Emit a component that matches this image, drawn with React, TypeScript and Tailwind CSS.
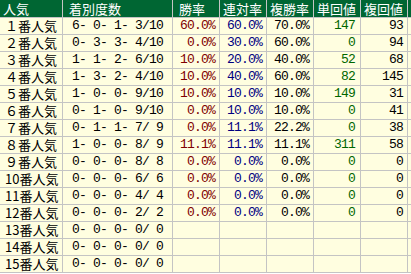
import React from "react";

type Row = {
  name: string;
  record: string;
  win?: string;
  ren?: string;
  fuku?: string;
  tanVal?: string;
  fukuVal?: string;
};

const rows: Row[] = [
  { name: "１番人気", record: "6- 0- 1- 3/10", win: "60.0%", ren: "60.0%", fuku: "70.0%", tanVal: "147", fukuVal: "93" },
  { name: "２番人気", record: "0- 3- 3- 4/10", win: "0.0%", ren: "30.0%", fuku: "60.0%", tanVal: "0", fukuVal: "94" },
  { name: "３番人気", record: "1- 1- 2- 6/10", win: "10.0%", ren: "20.0%", fuku: "40.0%", tanVal: "52", fukuVal: "68" },
  { name: "４番人気", record: "1- 3- 2- 4/10", win: "10.0%", ren: "40.0%", fuku: "60.0%", tanVal: "82", fukuVal: "145" },
  { name: "５番人気", record: "1- 0- 0- 9/10", win: "10.0%", ren: "10.0%", fuku: "10.0%", tanVal: "149", fukuVal: "31" },
  { name: "６番人気", record: "0- 1- 0- 9/10", win: "0.0%", ren: "10.0%", fuku: "10.0%", tanVal: "0", fukuVal: "41" },
  { name: "７番人気", record: "0- 1- 1- 7/ 9", win: "0.0%", ren: "11.1%", fuku: "22.2%", tanVal: "0", fukuVal: "38" },
  { name: "８番人気", record: "1- 0- 0- 8/ 9", win: "11.1%", ren: "11.1%", fuku: "11.1%", tanVal: "311", fukuVal: "58" },
  { name: "９番人気", record: "0- 0- 0- 8/ 8", win: "0.0%", ren: "0.0%", fuku: "0.0%", tanVal: "0", fukuVal: "0" },
  { name: "10番人気", record: "0- 0- 0- 6/ 6", win: "0.0%", ren: "0.0%", fuku: "0.0%", tanVal: "0", fukuVal: "0" },
  { name: "11番人気", record: "0- 0- 0- 4/ 4", win: "0.0%", ren: "0.0%", fuku: "0.0%", tanVal: "0", fukuVal: "0" },
  { name: "12番人気", record: "0- 0- 0- 2/ 2", win: "0.0%", ren: "0.0%", fuku: "0.0%", tanVal: "0", fukuVal: "0" },
  { name: "13番人気", record: "0- 0- 0- 0/ 0" },
  { name: "14番人気", record: "0- 0- 0- 0/ 0" },
  { name: "15番人気", record: "0- 0- 0- 0/ 0" },
];

const headers = ["人気", " 着別度数", " 勝率", "連対率", "複勝率", "単回値", "複回値", "平"];

const jp = "font-['Noto_Sans_CJK_JP',sans-serif] text-[13px]";
const num = "font-['Liberation_Mono','Noto_Sans_CJK_JP',monospace] text-[13px] tracking-[-0.8px] whitespace-pre";
const cell = "h-[16px] bg-[#fffee0] leading-[16px]";

export default function App() {
  return (
    <div className="w-[411px] h-[274px] overflow-hidden bg-white">
      <div className="grid grid-cols-[62px_109px_46px_46px_46px_46px_46px_1fr] gap-px bg-[#c4c4c4] pb-px">
        {headers.map((h, i) => (
          <div
            key={i}
            className={`h-[17px] bg-[#006633] text-white leading-[17px] whitespace-pre overflow-hidden pl-[3px] ${jp}`}
          >
            {h}
          </div>
        ))}
        {rows.map((r, i) => (
          <React.Fragment key={i}>
            <div className={`${cell} pl-[5px] whitespace-pre text-black ${jp}`}>{r.name}</div>
            <div className={`${cell} text-center text-black ${num}`}>{r.record}</div>
            <div className={`${cell} text-right pr-[4px] text-[#800000] ${num}`}>{r.win}</div>
            <div className={`${cell} text-right pr-[4px] text-[#000080] ${num}`}>{r.ren}</div>
            <div className={`${cell} text-right pr-[4px] text-black ${num}`}>{r.fuku}</div>
            <div className={`${cell} text-right pr-[5px] text-[#006600] ${num}`}>{r.tanVal}</div>
            <div className={`${cell} text-right pr-[4px] text-black ${num}`}>{r.fukuVal}</div>
            <div className={cell} />
          </React.Fragment>
        ))}
      </div>
    </div>
  );
}
